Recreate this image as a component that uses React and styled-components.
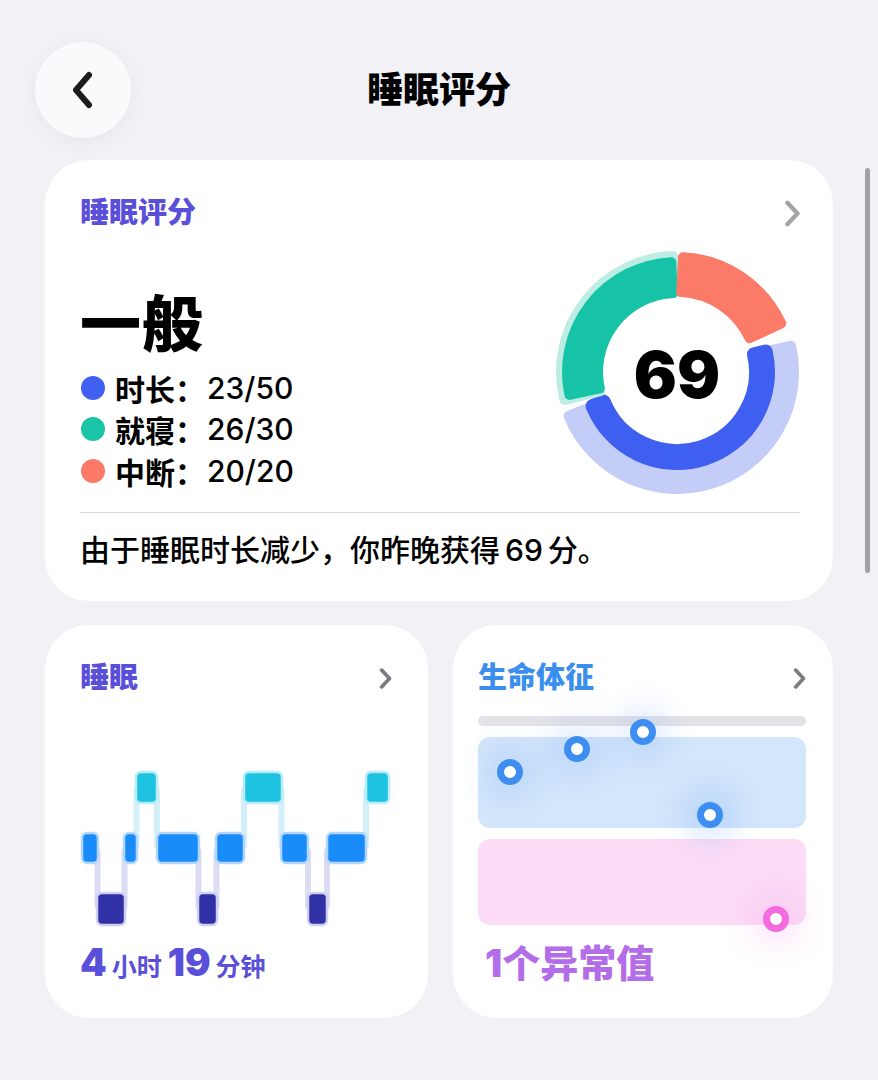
import React from "react";
import styled, { createGlobalStyle } from "styled-components";

const SANS = `"Inter", "Noto Sans CJK SC", sans-serif`;

const GlobalStyle = createGlobalStyle`
  html, body {
    margin: 0;
    padding: 0;
    background: #f1f1f6;
  }
  body {
    font-family: ${SANS};
    color: #000;
  }
`;

const Page = styled.div`
  position: relative;
  width: 878px;
  min-height: 1080px;
  box-sizing: border-box;
  padding: 42px 45px 0 45px;
  background: #f1f1f6;
  overflow: hidden;
`;

const Header = styled.div`
  display: grid;
  grid-template-columns: 96px 1fr 96px;
  align-items: center;
  height: 96px;
  margin: 0 0 0 -10px;
  width: 808px;
`;

const BackButton = styled.button`
  width: 96px;
  height: 96px;
  border-radius: 50%;
  border: none;
  background: #fafafc;
  box-shadow: 0 4px 22px rgba(0, 0, 0, 0.05);
  display: flex;
  align-items: center;
  justify-content: center;
  padding: 0;
  cursor: pointer;
`;

const PageTitle = styled.h1`
  margin: 0;
  text-align: center;
  font-size: 36px;
  font-weight: 900;
  line-height: 1;
`;

const Card = styled.section`
  background: #fff;
  border-radius: 44px;
  box-sizing: border-box;
  padding: ${(p) => p.$pad || "36px 33px 34px 35px"};
`;

const ScoreCard = styled(Card)`
  margin-top: 22px;
`;

const CardHead = styled.div`
  display: flex;
  align-items: center;
  justify-content: space-between;
  height: 34px;
`;

const CardTitle = styled.h2`
  margin: 0;
  font-size: 29px;
  font-weight: 800;
  line-height: 34px;
  color: ${(p) => p.$color || "#5a4fd9"};
`;

const ScoreBody = styled.div`
  display: flex;
  justify-content: space-between;
  align-items: flex-start;
  margin-top: 17px;
`;

const ScoreLeft = styled.div`
  padding-top: 43px;
`;

const Grade = styled.div`
  font-size: 61px;
  font-weight: 900;
  line-height: 70px;
  letter-spacing: 1px;
`;

const Legend = styled.ul`
  list-style: none;
  margin: 7px 0 0 0;
  padding: 0 0 0 1px;
`;

const LegendRow = styled.li`
  display: flex;
  align-items: center;
  height: 41.5px;
`;

const Dot = styled.span`
  width: 24px;
  height: 24px;
  border-radius: 50%;
  background: ${(p) => p.$color};
  margin-right: 10px;
`;

const LegendLabel = styled.span`
  font-size: 30px;
  font-weight: 700;
`;

const LegendValue = styled.span`
  font-size: 30px;
  font-weight: 500;
  margin-left: 2px;
`;

const Donut = styled.svg`
  display: block;
  margin-right: -2px;
  overflow: visible;
`;

const Divider = styled.hr`
  border: none;
  height: 1px;
  background: #d9d9de;
  margin: 15px 0 0 0;
`;

const Summary = styled.p`
  margin: 20px 0 0 0;
  font-size: 30px;
  line-height: 34px;
  font-weight: 500;
  word-spacing: -3px;
`;

const Grid = styled.div`
  display: grid;
  grid-template-columns: 1fr 1fr;
  gap: 25px;
  margin-top: 24px;
`;

const SmallCard = styled(Card)`
  height: 393px;
`;

const Hypno = styled.svg`
  display: block;
  margin-top: 73px;
  overflow: visible;
`;

const Duration = styled.div`
  margin-top: 12px;
  color: #5a4fd9;
  font-weight: 800;
  display: flex;
  align-items: baseline;
  line-height: 44px;
`;

const Big = styled.span`
  font-size: 38px;
  font-weight: 900;
`;

const Unit = styled.span`
  font-size: 25px;
  font-weight: 700;
  margin: 0 6px 0 5px;
`;

const Chart = styled.div`
  position: relative;
  margin-top: 21px;
`;

const Track = styled.div`
  height: 10px;
  border-radius: 5px;
  background: #e3e3e8;
`;

const Band = styled.div`
  height: ${(p) => p.$h}px;
  border-radius: 12px;
  background: ${(p) => p.$bg};
  margin-top: 11px;
`;

const Marker = styled.span`
  position: absolute;
  width: 26px;
  height: 26px;
  box-sizing: border-box;
  border-radius: 50%;
  border: 7px solid ${(p) => p.$color};
  background: #fff;
  transform: translate(-50%, -50%);
  box-shadow: 0 0 30px 14px ${(p) => p.$glow};
`;

const Outlier = styled.div`
  margin-top: 16px;
  padding-left: 7px;
  font-size: 38px;
  font-weight: 900;
  line-height: 44px;
  color: #b46de8;
`;

const ScrollThumb = styled.div`
  position: absolute;
  right: 8px;
  top: 168px;
  width: 5px;
  height: 405px;
  border-radius: 3px;
  background: #a1a1a6;
`;

const Chevron = ({ size = 22, color = "#8e8e93", stroke = 3.5 }) => (
  <svg width={size * 0.6} height={size} viewBox="0 0 12 20" fill="none">
    <path
      d="M2.5 2 L10 10 L2.5 18"
      stroke={color}
      strokeWidth={stroke}
      strokeLinecap="round"
      strokeLinejoin="round"
    />
  </svg>
);

const pt = (cx, cy, r, a) => {
  const t = (a * Math.PI) / 180;
  return [cx + r * Math.sin(t), cy - r * Math.cos(t)];
};

const sector = (cx, cy, r1, r2, a0, a1) => {
  const large = a1 - a0 > 180 ? 1 : 0;
  const [x0, y0] = pt(cx, cy, r2, a0);
  const [x1, y1] = pt(cx, cy, r2, a1);
  const [x2, y2] = pt(cx, cy, r1, a1);
  const [x3, y3] = pt(cx, cy, r1, a0);
  return `M${x0} ${y0} A${r2} ${r2} 0 ${large} 1 ${x1} ${y1} L${x2} ${y2} A${r1} ${r1} 0 ${large} 0 ${x3} ${y3} Z`;
};

const Arc = ({ r1, r2, a0, a1, color, round = 5 }) => (
  <path
    d={sector(125, 125, r1 + round, r2 - round, a0, a1)}
    fill={color}
    stroke={color}
    strokeWidth={round * 2}
    strokeLinejoin="round"
  />
);

const ROWS = {
  T: { y: 4, h: 31, fill: "#1ec3e2", edge: "#b8ecf7" },
  M: { y: 65, h: 30, fill: "#1a8cfa", edge: "#b3d6fc" },
  B: { y: 125, h: 32, fill: "#3131a6", edge: "#cfcff2" },
};

const stages = [
  ["M", 2, 18],
  ["B", 17, 45],
  ["M", 44, 57],
  ["T", 56, 77],
  ["M", 77, 119],
  ["B", 118, 137],
  ["M", 136, 164],
  ["T", 164, 202],
  ["M", 201, 228],
  ["B", 228, 247],
  ["M", 247, 286],
  ["T", 286, 309],
];

const Hypnogram = () => (
  <Hypno width="312" height="160" viewBox="0 0 312 160">
    {stages.slice(1).map(([row, x0], i) => {
      const prev = stages[i];
      const a = ROWS[prev[0]];
      const b = ROWS[row];
      const top = Math.min(a.y + a.h / 2, b.y + b.h / 2);
      const bottom = Math.max(a.y + a.h / 2, b.y + b.h / 2);
      const x = (prev[2] + x0) / 2;
      const tone = prev[0] === "T" || row === "T" ? "#d3f0fa" : "#dcdcf5";
      return (
        <rect key={"c" + i} x={x - 3} y={top} width="6" height={bottom - top} rx="3" fill={tone} />
      );
    })}
    {stages.map(([row, x0, x1], i) => {
      const r = ROWS[row];
      return (
        <rect
          key={i}
          x={x0}
          y={r.y}
          width={x1 - x0}
          height={r.h}
          rx="5"
          fill={r.fill}
          stroke={r.edge}
          strokeWidth="2.5"
        />
      );
    })}
  </Hypno>
);

const markers = [
  { x: 32, y: 56, c: "#3d8ef0", g: "rgba(80, 150, 245, 0.16)" },
  { x: 99, y: 33, c: "#3d8ef0", g: "rgba(80, 150, 245, 0.16)" },
  { x: 165, y: 16, c: "#3d8ef0", g: "rgba(80, 150, 245, 0.16)" },
  { x: 232, y: 99, c: "#3d8ef0", g: "rgba(80, 150, 245, 0.2)" },
  { x: 298, y: 203, c: "#f36bdf", g: "rgba(245, 120, 225, 0.18)" },
];

export default function App() {
  return (
    <>
      <GlobalStyle />
      <Page>
        <Header>
          <BackButton aria-label="返回">
            <svg width="26" height="38" viewBox="0 0 26 38" fill="none">
              <path
                d="M19 4 L6 19 L19 34"
                stroke="#1c1c1e"
                strokeWidth="6"
                strokeLinecap="round"
                strokeLinejoin="round"
              />
            </svg>
          </BackButton>
          <PageTitle>睡眠评分</PageTitle>
          <span />
        </Header>

        <ScoreCard>
          <CardHead>
            <CardTitle>睡眠评分</CardTitle>
            <Chevron size={27} color="#a3a3a8" stroke={3.2} />
          </CardHead>
          <ScoreBody>
            <ScoreLeft>
              <Grade>一般</Grade>
              <Legend>
                <LegendRow>
                  <Dot $color="#4060f2" />
                  <LegendLabel>时长：</LegendLabel>
                  <LegendValue>23/50</LegendValue>
                </LegendRow>
                <LegendRow>
                  <Dot $color="#19c4a7" />
                  <LegendLabel>就寝：</LegendLabel>
                  <LegendValue>26/30</LegendValue>
                </LegendRow>
                <LegendRow>
                  <Dot $color="#fb7a67" />
                  <LegendLabel>中断：</LegendLabel>
                  <LegendValue>20/20</LegendValue>
                </LegendRow>
              </Legend>
            </ScoreLeft>
            <Donut width="250" height="250" viewBox="0 0 250 250">
              <Arc r1={76} r2={122} a0={77} a1={248} color="#c4cdf7" />
              <Arc r1={72} r2={98} a0={77} a1={248} color="#3f5ff1" round={7} />
              <Arc r1={74} r2={121} a0={256} a1={358} color="#bcece2" />
              <Arc r1={74} r2={115} a0={258} a1={357} color="#17c3a6" />
              <Arc r1={75} r2={120} a0={3} a1={65} color="#fb7b68" />
              <text
                x="125"
                y="127"
                textAnchor="middle"
                dominantBaseline="central"
                fontFamily={SANS}
                fontSize="64"
                fontWeight="900"
                fill="#000"
              >
                69
              </text>
            </Donut>
          </ScoreBody>
          <Divider />
          <Summary>由于睡眠时长减少，你昨晚获得 69 分。</Summary>
        </ScoreCard>

        <Grid>
          <SmallCard $pad="36px 36px 0 35px">
            <CardHead>
              <CardTitle>睡眠</CardTitle>
              <Chevron size={21} color="#7c7c80" stroke={3.5} />
            </CardHead>
            <Hypnogram />
            <Duration>
              <Big>4</Big>
              <Unit>小时</Unit>
              <Big>19</Big>
              <Unit>分钟</Unit>
            </Duration>
          </SmallCard>

          <SmallCard $pad="36px 27px 0 25px">
            <CardHead>
              <CardTitle $color="#3a8eee">生命体征</CardTitle>
              <Chevron size={21} color="#7c7c80" stroke={3.5} />
            </CardHead>
            <Chart>
              <Track />
              <Band $h={91} $bg="#d3e6fb" />
              <Band $h={86} $bg="#fcdcf7" />
              {markers.map((m, i) => (
                <Marker
                  key={i}
                  $color={m.c}
                  $glow={m.g}
                  style={{ left: m.x, top: m.y }}
                />
              ))}
            </Chart>
            <Outlier>1个异常值</Outlier>
          </SmallCard>
        </Grid>

        <ScrollThumb />
      </Page>
    </>
  );
}
